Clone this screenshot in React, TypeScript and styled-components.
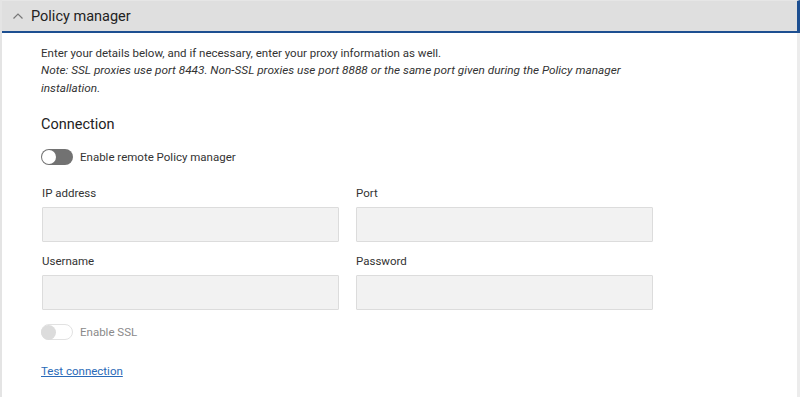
import React from "react";
import styled, { createGlobalStyle } from "styled-components";

const Global = createGlobalStyle`
  html, body { margin: 0; padding: 0; background: #fff; }
  body { font-family: Roboto, "Noto Sans", Arial, sans-serif; color: #333; }
`;

const Panel = styled.div`
  width: 800px;
  height: 397px;
  box-sizing: border-box;
  border-left: 2px solid #e4e4e4;
  border-right: 3px solid #ececec;
  background: #fff;
`;

const Header = styled.div`
  height: 33px;
  box-sizing: border-box;
  margin-right: -3px;
  background: #dfdfdf;
  border-bottom: 2px solid #1d4f91;
  border-right: 3px solid #1d4f91;
  border-top: 1px solid #e6e6e6;
  display: flex;
  align-items: center;
  padding-left: 10px;
  gap: 7px;
`;

const Title = styled.span`
  font-size: 14.5px;
  color: #222;
`;

const Body = styled.div`
  padding: 11px 0 0 39px;
  font-size: 11.5px;
`;

const Intro = styled.p`
  margin: 0;
  line-height: 18px;
  color: #333;
`;

const Note = styled.p`
  margin: 0;
  line-height: 17.5px;
  font-style: italic;
  font-size: 11.8px;
  width: 600px;
  color: #333;
`;

const SectionTitle = styled.h3`
  margin: 18px 0 0;
  font-size: 14.5px;
  font-weight: 400;
  color: #222;
  line-height: 20px;
`;

const ToggleRow = styled.div<{ $mt: number }>`
  display: flex;
  align-items: center;
  gap: 7px;
  margin-top: ${(p) => p.$mt}px;
  height: 16px;
`;

const Track = styled.div<{ $disabled?: boolean }>`
  width: 32px;
  height: 16px;
  border-radius: 8px;
  box-sizing: border-box;
  background: ${(p) => (p.$disabled ? "#fff" : "#727272")};
  border: ${(p) => (p.$disabled ? "1px solid #e2e2e2" : "none")};
  display: flex;
  align-items: center;
  padding: 0 ${(p) => (p.$disabled ? 0 : 1)}px;
`;

const Knob = styled.div<{ $disabled?: boolean }>`
  width: ${(p) => (p.$disabled ? 15 : 14)}px;
  height: ${(p) => (p.$disabled ? 15 : 14)}px;
  border-radius: 50%;
  background: ${(p) => (p.$disabled ? "#dcdcdc" : "#fff")};
  margin-left: ${(p) => (p.$disabled ? -1 : 0)}px;
`;

const ToggleLabel = styled.span<{ $disabled?: boolean }>`
  color: ${(p) => (p.$disabled ? "#8a8a8a" : "#333")};
  font-size: 11.5px;
`;

const Grid = styled.div<{ $mt: number }>`
  display: grid;
  grid-template-columns: 297px 297px;
  column-gap: 17px;
  margin-top: ${(p) => p.$mt}px;
  padding-left: 1px;
`;

const Field = styled.div`
  display: flex;
  flex-direction: column;
`;

const Label = styled.label`
  font-size: 11.5px;
  color: #333;
  line-height: 14px;
`;

const Input = styled.div`
  margin-top: 7px;
  height: 35px;
  box-sizing: border-box;
  background: #f2f2f2;
  border: 1px solid #dcdcdc;
  border-radius: 1px;
`;

const Link = styled.a`
  display: inline-block;
  margin-top: 24px;
  font-size: 11.5px;
  color: #2a6ab8;
  text-decoration: underline;
`;

const Chevron = () => (
  <svg width="12" height="8" viewBox="0 0 12 8">
    <path d="M1.5 6.5 L6 2 L10.5 6.5" fill="none" stroke="#777" strokeWidth="1.2" />
  </svg>
);

export default function App() {
  return (
    <>
      <Global />
      <Panel>
        <Header>
          <Chevron />
          <Title>Policy manager</Title>
        </Header>
        <Body>
          <Intro>Enter your details below, and if necessary, enter your proxy information as well.</Intro>
          <Note>
            Note: SSL proxies use port 8443. Non-SSL proxies use port 8888 or the same port given during the Policy manager installation.
          </Note>
          <SectionTitle>Connection</SectionTitle>
          <ToggleRow $mt={14}>
            <Track>
              <Knob />
            </Track>
            <ToggleLabel>Enable remote Policy manager</ToggleLabel>
          </ToggleRow>
          <Grid $mt={21}>
            <Field>
              <Label>IP address</Label>
              <Input />
            </Field>
            <Field>
              <Label>Port</Label>
              <Input />
            </Field>
          </Grid>
          <Grid $mt={12}>
            <Field>
              <Label>Username</Label>
              <Input />
            </Field>
            <Field>
              <Label>Password</Label>
              <Input />
            </Field>
          </Grid>
          <ToggleRow $mt={14}>
            <Track $disabled>
              <Knob $disabled />
            </Track>
            <ToggleLabel $disabled>Enable SSL</ToggleLabel>
          </ToggleRow>
          <Link href="#">Test connection</Link>
        </Body>
      </Panel>
    </>
  );
}
